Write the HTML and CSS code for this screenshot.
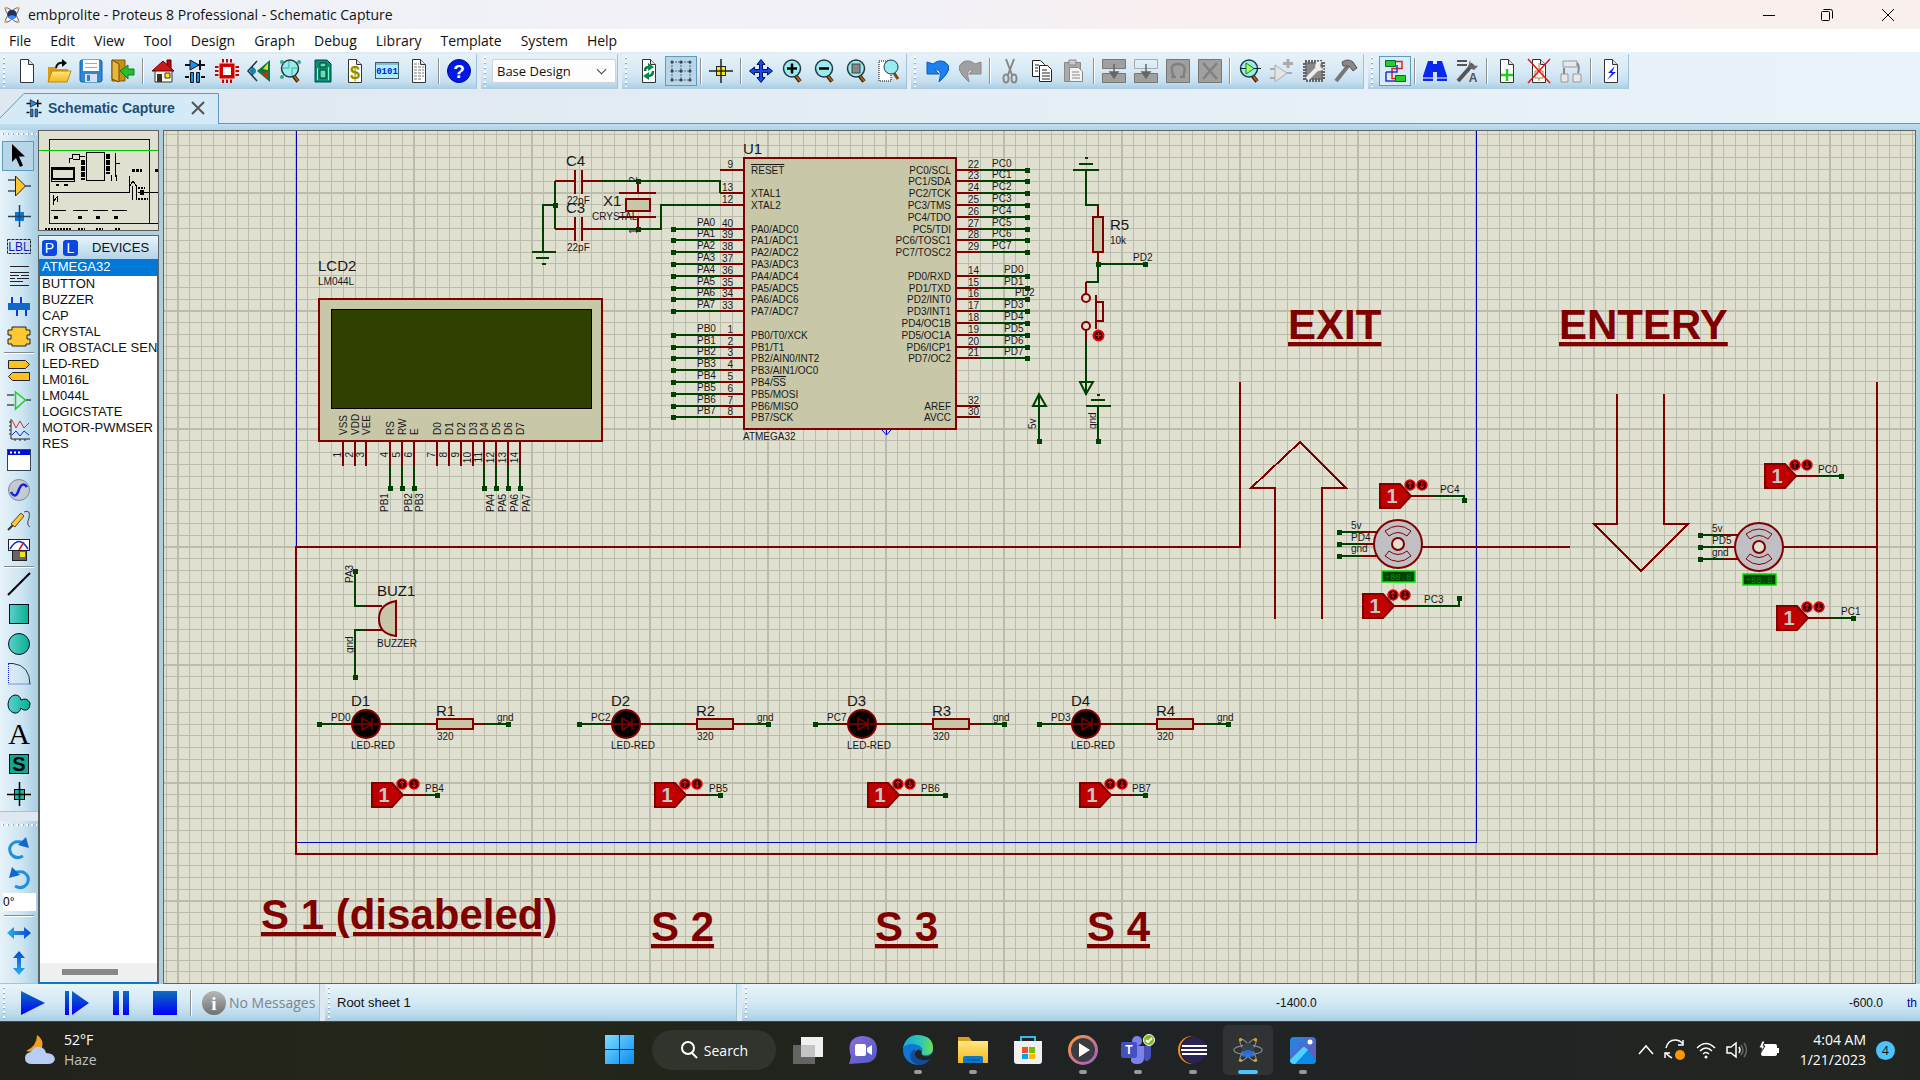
FILE: index.html
```html
<!DOCTYPE html>
<html lang="en">
<head>
<meta charset="utf-8">
<title>embprolite - Proteus 8 Professional - Schematic Capture</title>
<link rel="stylesheet" href="styles.css">
</head>
<body>
<svg class="defs" width="0" height="0" aria-hidden="true">
  <defs>
    <linearGradient id="gBlueV" x1="0" y1="0" x2="0" y2="1"><stop offset="0" stop-color="#0c6fb8"/><stop offset="1" stop-color="#0000ff"/></linearGradient>
    <linearGradient id="gFolder" x1="0" y1="0" x2="0" y2="1"><stop offset="0" stop-color="#ffe680"/><stop offset="1" stop-color="#f5b81c"/></linearGradient>
    <linearGradient id="gTeal" x1="0" y1="0" x2="1" y2="0"><stop offset="0" stop-color="#5cd0cc"/><stop offset="1" stop-color="#08b090"/></linearGradient>
    <linearGradient id="gArrow" x1="0" y1="0" x2="1" y2="0"><stop offset="0" stop-color="#30b0e8"/><stop offset="1" stop-color="#0048d8"/></linearGradient>
    <linearGradient id="gArrowV" x1="0" y1="0" x2="0" y2="1"><stop offset="0" stop-color="#0048d8"/><stop offset="1" stop-color="#30b0e8"/></linearGradient>
    <linearGradient id="gGrey" x1="0" y1="0" x2="0" y2="1"><stop offset="0" stop-color="#b8b8b8"/><stop offset="1" stop-color="#707070"/></linearGradient>
    <linearGradient id="gWin" x1="0" y1="0" x2="1" y2="1"><stop offset="0" stop-color="#7fdcff"/><stop offset="1" stop-color="#0a8cf0"/></linearGradient>
    <linearGradient id="gEdge" x1="0" y1="0" x2="1" y2="0"><stop offset="0" stop-color="#1fa5d8"/><stop offset=".6" stop-color="#2cc8b4"/><stop offset="1" stop-color="#6fe04c"/></linearGradient>
    <linearGradient id="gRing" x1="0" y1="0" x2="1" y2="1"><stop offset="0" stop-color="#ff9838"/><stop offset="1" stop-color="#a05cd0"/></linearGradient>
    <linearGradient id="gPhoto" x1="0" y1="0" x2="1" y2="1"><stop offset="0" stop-color="#1f8be8"/><stop offset="1" stop-color="#7a4cb0"/></linearGradient>
    <linearGradient id="gChat" x1="0" y1="0" x2="1" y2="1"><stop offset="0" stop-color="#8a70d8"/><stop offset="1" stop-color="#5058c8"/></linearGradient>
    <symbol id="page" viewBox="0 0 24 24"><path d="M5.500.5h8l5 5v18h-13z" fill="#fff" stroke="#333"/><path d="M13.500.5v5h5" fill="#ddd" stroke="#333"/></symbol>
    <symbol id="lens" viewBox="0 0 24 24"><path d="M14 16l5 6.500" stroke="#402000" stroke-width="4"/><path d="M15 17l4 5" stroke="#b06818" stroke-width="2"/><circle cx="11" cy="9.500" r="8.500" fill="#98ecf0" stroke="#26383c" stroke-width="1.500"/></symbol>
    <symbol id="schem" viewBox="0 0 24 24"><path d="M2 6h20M6 18H2M18 18h4" stroke="#111" stroke-width="2"/><path d="M7 1v10l9-5z" fill="#1c90f0" stroke="#111"/><path d="M17 1v10" stroke="#111" stroke-width="2"/><path d="M7.500 13.500h3v10h-3zM13.500 13.500h3v10h-3z" fill="#1c90f0" stroke="#111"/></symbol>
    <symbol id="atom" viewBox="0 0 32 32"><g fill="none" stroke="#8c9096" stroke-width="1.200"><ellipse cx="16" cy="16" rx="15" ry="5"/><ellipse cx="16" cy="16" rx="14" ry="4" transform="rotate(55 16 16)"/><ellipse cx="16" cy="16" rx="14" ry="4" transform="rotate(-55 16 16)"/></g><circle cx="16" cy="15" r="6.500" fill="#34404e"/><path d="M10 18q6-4 12 0l2 4q-8 3-16 0z" fill="#2c78e8" opacity=".8"/><g fill="#e0a030"><circle cx="8" cy="5" r="1.800"/><circle cx="24" cy="5" r="1.800"/><circle cx="8" cy="27" r="1.800"/><circle cx="24" cy="27" r="1.800"/></g></symbol>
  </defs>
</svg>

<header class="titlebar">
  <svg class="appicon" viewBox="0 0 32 32" aria-hidden="true"><g fill="none" stroke="#556" stroke-width="1.500"><ellipse cx="16" cy="16" rx="17" ry="5" transform="rotate(48 16 16)"/><ellipse cx="16" cy="16" rx="17" ry="5" transform="rotate(-48 16 16)"/></g><circle cx="16" cy="15" r="8.500" fill="#203458"/><path d="M9 19q7-5 14 0-7 9-14 0" fill="#3b8bff"/><g fill="#e0a860"><circle cx="5" cy="4" r="2.500"/><circle cx="27" cy="4" r="2.500"/><circle cx="5" cy="28" r="2.500"/><circle cx="27" cy="28" r="2.500"/></g></svg>
  <h1 class="title">embprolite - Proteus 8 Professional - Schematic Capture</h1>
  <div class="wincontrols">
    <button aria-label="Minimize"><svg width="14" height="14"><path d="M1 7.500h12" stroke="#000"/></svg></button>
    <button aria-label="Restore"><svg width="14" height="14" fill="none" stroke="#000"><rect x="1.500" y="3.500" width="8" height="9" rx="1"/><path d="M3.500 1.500h7q2 0 2 2v7"/></svg></button>
    <button aria-label="Close"><svg width="14" height="14"><path d="M1 1l12 12M13 1L1 13" stroke="#000"/></svg></button>
  </div>
</header>

<nav class="menubar">
  <button>File</button><button>Edit</button><button>View</button><button>Tool</button><button>Design</button><button>Graph</button><button>Debug</button><button>Library</button><button>Template</button><button>System</button><button>Help</button>
</nav>

<div class="toolbars">
  <div class="toolbar">
    <button aria-label="New"><svg><use href="#page"/></svg></button>
    <button aria-label="Open"><svg viewBox="0 0 24 24"><path d="M1 8h7l2 2h11v13H1z" fill="#d89c10"/><path d="M1 23l4-11h19l-4 11z" fill="url(#gFolder)" stroke="#c08808"/><path d="M9 9q1-6 8-5" fill="none" stroke="#111" stroke-width="2"/><path d="M15 0l5 4-5 4z"/></svg></button>
    <button aria-label="Save"><svg viewBox="0 0 24 24"><rect x="1" y="1" width="22" height="22" rx="2" fill="#2c88d8" stroke="#1060a8"/><path d="M4 1h16v11H4z" fill="#fff"/><path d="M6 4.500h12M6 8.500h12" stroke="#9ab"/><path d="M6 15h12v8H6z" fill="#dde"/><path d="M8 16h3v6H8z" fill="#28c"/></svg></button>
    <button aria-label="Close project"><svg viewBox="0 0 24 24"><path d="M1 1h13v21H1z" fill="#c89018" stroke="#805808"/><path d="M1 1l7 4v18l-7-3z" fill="#e8b838" stroke="#704c08"/><path d="M9 12l8-6v4h6v6h-6v4z" fill="#20c030" stroke="#108018"/></svg></button>
    <i class="sep"></i>
    <button aria-label="Home"><svg viewBox="0 0 24 24"><path d="M16 1h4v9h-4z" fill="#c00" stroke="#500"/><path d="M4 11h17v12H4z" fill="#fffbe0" stroke="#333"/><path d="M1 12L12 2l11 10z" fill="#d01818" stroke="#600"/><path d="M6 15h5v8H6z" fill="#333"/><path d="M14 14h5v5h-5z" fill="#ffe820" stroke="#333"/></svg></button>
    <button aria-label="Schematic capture"><svg><use href="#schem"/></svg></button>
    <button aria-label="PCB layout"><svg viewBox="0 0 24 24"><path d="M8 0v24M12 0v24M16 0v24M0 8h24M0 12h24M0 16h24" stroke="#c80000" stroke-width="2"/><rect x="4" y="4" width="16" height="16" fill="#d00000" stroke="#f8dcdc"/><rect x="8" y="8" width="8" height="8" fill="#fff"/></svg></button>
    <button aria-label="3D visualizer"><svg viewBox="0 0 24 24"><path d="M10 2L1 12l9 10M5 8q5 4 0 8" fill="none" stroke="#234" stroke-width="1.500"/><circle cx="6" cy="12" r="3" fill="#18a"/><path d="M23 1v22L10 12z" fill="#0a7a38"/><path d="M21 4v7l-5-1z" fill="#e8e020"/><path d="M21 13v7l-7-6z" fill="#e02020"/></svg></button>
    <button aria-label="Gerber viewer"><svg viewBox="0 0 24 24"><use href="#lens"/><path d="M3 9h7V2M19 9h-6v8" fill="none" stroke="#40b088"/><circle cx="3" cy="3" r="2" fill="#3a8"/><circle cx="20" cy="3" r="2" fill="#3a8"/><circle cx="3" cy="18" r="2" fill="#3a8"/></svg></button>
    <button aria-label="Design explorer"><svg viewBox="0 0 24 24"><path d="M4 1h12l4 4v18H4z" fill="#0c9070" stroke="#045"/><path d="M9 4h6v4H9zM9 11h6v8H9z" fill="#60e0b0" stroke="#033"/><path d="M6.500 9v12M17.500 8v13" stroke="#70ffc0"/></svg></button>
    <button aria-label="Bill of materials"><svg viewBox="0 0 24 24"><use href="#page"/><text x="12" y="20" class="ic-dollar">$</text></svg></button>
    <button aria-label="Source code"><svg viewBox="0 0 24 24"><rect x=".5" y="3.500" width="23" height="16" fill="#a8f0ff" stroke="#456"/><path d="M1 5h22" stroke="#68a"/><text x="12" y="15" class="ic-bits">0101</text></svg></button>
    <button aria-label="Project notes"><svg viewBox="0 0 24 24"><use href="#page"/><path d="M7 5h5M7 8h10M7 11h10M7 14h10M7 17h10M7 20h7" stroke="#777" stroke-dasharray="3 1"/></svg></button>
    <i class="sep"></i>
    <button aria-label="Help"><svg viewBox="0 0 24 24"><circle cx="12" cy="12" r="11.500" fill="#0018e8" stroke="#000890"/><text x="12" y="19" class="ic-help">?</text></svg></button>
  </div>
  <div class="toolbar">
    <label class="hidden" for="variant">Design variant</label>
    <select id="variant" class="variant"><option>Base Design</option></select>
  </div>
  <div class="toolbar">
    <button aria-label="Redraw"><svg viewBox="0 0 24 24"><use href="#page"/><path d="M8 12q0-4 4-4M16 12q0 5-5 5" fill="none" stroke="#0a7a40" stroke-width="2.500"/><path d="M11 4l6 4-6 4zM12 13v8l-6-4z" fill="#0a8a48"/></svg></button>
    <button class="pressed" aria-label="Toggle grid"><svg viewBox="0 0 24 24"><path d="M3 3h18M3 12h18M3 21h18M3 3v18M12 3v18M21 3v18" stroke="#567" stroke-dasharray="2 1"/><g fill="#345"><circle cx="3" cy="3" r="1.500"/><circle cx="12" cy="3" r="1.500"/><circle cx="21" cy="3" r="1.500"/><circle cx="3" cy="12" r="1.500"/><circle cx="12" cy="12" r="1.500"/><circle cx="21" cy="12" r="1.500"/><circle cx="3" cy="21" r="1.500"/><circle cx="12" cy="21" r="1.500"/><circle cx="21" cy="21" r="1.500"/></g></svg></button>
    <i class="sep"></i>
    <button aria-label="Origin"><svg viewBox="0 0 24 24"><rect x="7.500" y="7.500" width="9" height="9" fill="#ffe800" stroke="#222"/><path d="M12 0v24M0 12h24" stroke="#222" stroke-width="1.500"/></svg></button>
    <i class="sep"></i>
    <button aria-label="Centre at cursor"><svg viewBox="0 0 24 24"><path d="M12 .5l4 5h-2.500v5h5V8l5 4-5 4v-2.500h-5v5H16l-4 5-4-5h2.500v-5h-5V16l-5-4 5-4v2.500h5v-5H8z" fill="#1848f0" stroke="#001050"/></svg></button>
    <button aria-label="Zoom in"><svg viewBox="0 0 24 24"><use href="#lens"/><path d="M6 9.500h10M11 4.500v10" stroke="#000" stroke-width="2.500"/></svg></button>
    <button aria-label="Zoom out"><svg viewBox="0 0 24 24"><use href="#lens"/><path d="M6 9.500h10" stroke="#000" stroke-width="2.500"/></svg></button>
    <button aria-label="Zoom to sheet"><svg viewBox="0 0 24 24"><use href="#lens"/><rect x="7" y="5" width="8" height="9" fill="#888" stroke="#444"/></svg></button>
    <button aria-label="Zoom to area"><svg viewBox="0 0 24 24"><rect x="2" y="2" width="12" height="20" fill="#fff" stroke="#000" stroke-dasharray="1 1"/><path d="M17 14l4 6" stroke="#804810" stroke-width="3"/><circle cx="14" cy="8" r="7" fill="#98ecf0" stroke="#26383c"/></svg></button>
  </div>
  <div class="toolbar">
    <button aria-label="Undo"><svg viewBox="0 0 24 24"><path d="M1 3v12h12l-4-4q8-2 4 12 16-14 6-20-6-3-12 2z" fill="#1c80f0" stroke="#0c58c0"/></svg></button>
    <button aria-label="Redo"><svg viewBox="0 0 24 24"><path d="M23 3v12H11l4-4q-8-2-4 12Q-5 9 5 3q6-3 12 2z" fill="#a0a0a0" stroke="#888"/></svg></button>
    <i class="sep"></i>
    <button aria-label="Cut"><svg viewBox="0 0 24 24" fill="none" stroke="#888" stroke-width="2"><path d="M8 0l6 16M16 0l-6 16"/><ellipse cx="8" cy="19.500" rx="2.500" ry="4"/><ellipse cx="16" cy="19.500" rx="2.500" ry="4"/></svg></button>
    <button aria-label="Copy"><svg viewBox="0 0 24 24" fill="#fff" stroke="#222"><path d="M2.500 1.500h8l4 4v12h-12z"/><path d="M9.500 6.500h8l4 4v12h-12z"/><path d="M5 6h4M5 9h3M5 12h3M12 11h5M12 14h8M12 17h8M12 20h8"/></svg></button>
    <button aria-label="Paste"><svg viewBox="0 0 24 24"><path d="M2.500 3.500h16v19h-16z" fill="#aaa" stroke="#888"/><path d="M7 1h7v5H7z" fill="#ccc" stroke="#888"/><path d="M7.500 8.500h9l4 4v10h-13z" fill="#f4f4f4" stroke="#888"/><path d="M10 13h7M10 16h8M10 19h8" stroke="#888"/></svg></button>
    <i class="sep"></i>
    <button aria-label="Block copy"><svg viewBox="0 0 24 24"><path d="M.5.5h23v9H.5zM.5 14.500h23v9H.5z" fill="#a0a0a0" stroke="#777"/><path d="M12 5v8M8 13h8l-4 6z" stroke="#666" stroke-width="1.500" fill="#666"/></svg></button>
    <button aria-label="Block move"><svg viewBox="0 0 24 24"><path d="M.5.5h23v9H.5z" fill="none" stroke="#aaa"/><path d="M.5 14.500h23v9H.5z" fill="#a0a0a0" stroke="#777"/><path d="M12 5v8M8 13h8l-4 6z" stroke="#666" stroke-width="1.500" fill="#666"/></svg></button>
    <button aria-label="Block rotate"><svg viewBox="0 0 24 24"><path d="M.5.5h23v23H.5z" fill="#a0a0a0" stroke="#777"/><path d="M8 18q-6-13 4-13t5 13M5 18h5M14 18h5" fill="none" stroke="#808080" stroke-width="2.500"/></svg></button>
    <button aria-label="Block delete"><svg viewBox="0 0 24 24"><path d="M.5.5h23v23H.5z" fill="#a0a0a0" stroke="#777"/><path d="M5 4l14 16M19 4L5 20" stroke="#808080" stroke-width="2.500"/></svg></button>
    <i class="sep"></i>
    <button aria-label="Pick parts"><svg viewBox="0 0 24 24"><use href="#lens"/><path d="M8 4v11l8-5.500z" fill="#b0ff60" stroke="#083"/><path d="M2 9.500h6M16 9.500h7" stroke="#123"/></svg></button>
    <button aria-label="Make device"><svg viewBox="0 0 24 24"><path d="M0 10h6M0 19h6M16 14h6" stroke="#aaa" stroke-width="2"/><path d="M5 6v17l12-9z" fill="#e4e4e4" stroke="#aaa"/><path d="M18 0v9M13 4.500h10" stroke="#aaa" stroke-width="3"/></svg></button>
    <button aria-label="Packaging tool"><svg viewBox="0 0 24 24"><rect x="3" y="3" width="18" height="18" fill="#888" stroke="#666" stroke-width="4" stroke-dasharray="2 1"/><path d="M5 20L17 8" stroke="#eee" stroke-width="4"/><path d="M14 3l-1 5 4 4 6-2-4-1-1-3 2-4z" fill="#eee"/></svg></button>
    <button aria-label="Decompose"><svg viewBox="0 0 24 24"><path d="M2 22L14 7" stroke="#777" stroke-width="4"/><path d="M8 3q6-4 11 0l4 6-4 3-4-5-6 0z" fill="#888" stroke="#555"/></svg></button>
  </div>
  <div class="toolbar">
    <button class="pressed" aria-label="Wire autorouter"><svg viewBox="0 0 24 24" fill="none"><path d="M12 2.500h7v7H9v10h4" stroke="#e02020" stroke-width="1.500"/><path d="M14 6v7h-3M3 13v9h10M3 13h9" stroke="#2030e0" stroke-width="1.500"/><path d="M2.500 1.500h10v6h-10zM12.500 16.500h10v6h-10z" fill="#20d020" stroke="#064"/></svg></button>
    <i class="sep"></i>
    <button aria-label="Search and tag"><svg viewBox="0 0 24 24"><path d="M5 2h5v3h4V2h5l5 15v5H14v-9h-4v9H0v-5z" fill="#0828f0"/><path d="M0 19h10M14 19h10" stroke="#fff"/></svg></button>
    <button aria-label="Property assignment"><svg viewBox="0 0 24 24"><path d="M2 2h10M2 6h10" stroke="#555" stroke-width="2"/><path d="M3 22L18 5" stroke="#555" stroke-width="4"/><path d="M15 1l1 5 7 1-4 4-6-3z" fill="#666"/><text x="18" y="23" class="ic-a">A</text></svg></button>
    <i class="sep"></i>
    <button aria-label="New sheet"><svg viewBox="0 0 24 24"><use href="#page"/><path d="M12 10v12M6 16h12" stroke="#20d020" stroke-width="2.500"/></svg></button>
    <button aria-label="Remove sheet"><svg viewBox="0 0 24 24"><use href="#page"/><path d="M8 12h8v7H8zM12 4v8M12 19v3" fill="none" stroke="#b87840"/><path d="M1 0l22 24M23 0L1 24" stroke="#e81010" stroke-width="1.500"/></svg></button>
    <button aria-label="Exit to parent"><svg viewBox="0 0 24 24"><path d="M4 2h14v6H4zM2 15h7v8H2zM14 15h8v8h-8z" fill="#e8e8e8" stroke="#999"/><path d="M5 15V9M18 4q3 3 1 10" fill="none" stroke="#888" stroke-width="2"/></svg></button>
    <i class="sep"></i>
    <button aria-label="Electrical rules check"><svg viewBox="0 0 24 24"><use href="#page"/><path d="M16 7l-7 7h4l-5 7 9-8h-4z" fill="#1020f0"/></svg></button>
  </div>
</div>

<div class="tabs">
  <div class="tab">
    <svg class="tabshape" preserveAspectRatio="none" viewBox="0 0 219 31" aria-hidden="true"><path d="M0 31V25L24 .5H218.500V31z" fill="#d4eaf6"/><path d="M0 25L24 .5H218.500V31" fill="none" stroke="#5f9cb8"/></svg>
    <svg class="tabicon"><use href="#schem"/></svg>
    <span>Schematic Capture</span>
    <button aria-label="Close tab"><svg width="14" height="14"><path d="M1 1l12 12M13 1L1 13" stroke="#555" stroke-width="2"/></svg></button>
  </div>
</div>

<main class="workspace">
  <aside class="tools">
    <div class="toolcol">
      <button class="pressed" aria-label="Selection"><svg viewBox="0 0 24 24"><path d="M5 0v18l4-4 4 9 3-1.500-4-9h6z"/></svg></button>
      <button aria-label="Component"><svg viewBox="0 0 24 24"><path d="M1 6h8M1 17h8M18 12h6" stroke="#000"/><path d="M8.500 2v20l10-10z" fill="#ffc830" stroke="#222"/></svg></button>
      <button aria-label="Junction dot"><svg viewBox="0 0 24 24"><rect x="8" y="8" width="9" height="9" fill="#0878e0"/><path d="M12.500 1v22M1 12.500h23" stroke="#244458" stroke-width="1.500"/></svg></button>
      <button aria-label="Wire label"><svg viewBox="0 0 24 24"><rect x=".5" y="5.500" width="23" height="14" fill="none" stroke="#222" stroke-dasharray="3 1"/><text x="12" y="17" class="ic-lbl">LBL</text></svg></button>
      <button aria-label="Text script"><svg viewBox="0 0 24 24"><path d="M3 2.500h19M3 8.500h19M3 11.500h9M14 11.500h8M3 14.500h5M10 14.500h12M3 17.500h13M3 21.500h19" stroke="#222"/></svg></button>
      <button aria-label="Bus"><svg viewBox="0 0 24 24"><path d="M5 3v8M14 3v8M10 13v9M19 13v9" stroke="#1038e0" stroke-width="2"/><rect x="1" y="9" width="22" height="7" fill="#1068c8"/></svg></button>
      <button aria-label="Subcircuit"><svg viewBox="0 0 24 24"><path d="M5 3h14v3h4v5h-3v4h3v5h-4v2H5v-2H1v-5h3v-4H1V6h4z" fill="#ffc830" stroke="#222"/></svg></button>
      <i class="hsep"></i>
      <button aria-label="Terminals"><svg viewBox="0 0 24 24" fill="#ffc020" stroke="#222"><path d="M1.500 2.500h17l4 4-4 4h-17zM22.500 14.500h-17l-4 4 4 4h17z"/></svg></button>
      <button aria-label="Device pins"><svg viewBox="0 0 24 24"><path d="M0 7h7M0 17h7M19 12h5" stroke="#000"/><path d="M8.500 4v17l10-9z" fill="none" stroke="#20d020" stroke-width="1.500"/></svg></button>
      <button aria-label="Graph"><svg viewBox="0 0 24 24" fill="none"><path d="M4 1v20h19M2 4h2M2 8h2M2 12h2M2 16h2M8 21v2M13 21v2M18 21v2" stroke="#222"/><path d="M5 2l4 8 4-7 4 7 5-5" stroke="#e02828"/><path d="M5 17l4-4 4 5 4-5 5 4" stroke="#1028e0"/></svg></button>
      <button aria-label="Active popup"><svg viewBox="0 0 24 24"><rect x=".5" y="1.500" width="23" height="21" fill="#fff" stroke="#345"/><path d="M1 2h22v5H1z" fill="#0010d0"/><path d="M3 4.500h2M7 4.500h2M11 4.500h2" stroke="#fff" stroke-width="2"/></svg></button>
      <button aria-label="Generator"><svg viewBox="0 0 24 24"><circle cx="12" cy="12" r="10.500" fill="#c4cad0" stroke="#808890"/><path d="M4 14q4 7 7 0 4-12 9-5" fill="none" stroke="#1020e8" stroke-width="2.500"/></svg></button>
      <button aria-label="Probe"><svg viewBox="0 0 24 24"><path d="M1 22l6-6" stroke="#333" stroke-width="2"/><path d="M4 16L14 5l3 3L8 19z" fill="#ffc830" stroke="#543"/><path d="M17 4q7-3 5 6-3 7 1 9" fill="none" stroke="#444"/></svg></button>
      <button aria-label="Instruments"><svg viewBox="0 0 24 24"><rect x="1.500" y="1.500" width="21" height="11" fill="#fff" stroke="#222"/><path d="M3 11q9-15 18 0" fill="none" stroke="#1028e0" stroke-width="1.500"/><path d="M12 12l5-8" stroke="#e01010" stroke-width="1.500"/><rect x="5.500" y="12.500" width="14" height="10" fill="#666" stroke="#222"/><rect x="13" y="14" width="5" height="5" fill="#f0e020"/></svg></button>
      <i class="hsep"></i>
      <button aria-label="2D line"><svg viewBox="0 0 24 24"><path d="M1 23L23 1" stroke="#000" stroke-width="2"/></svg></button>
      <button aria-label="2D box"><svg viewBox="0 0 24 24"><rect x="2.500" y="2.500" width="19" height="19" fill="url(#gTeal)" stroke="#012"/></svg></button>
      <button aria-label="2D circle"><svg viewBox="0 0 24 24"><circle cx="12" cy="12" r="10.500" fill="url(#gTeal)" stroke="#012"/></svg></button>
      <button aria-label="2D arc"><svg viewBox="0 0 24 24" fill="none"><path d="M1.500 2v20h21" stroke="#2030e0" stroke-dasharray="1 1"/><path d="M1 1.500h5q17 2 17 21" stroke="#333"/></svg></button>
      <button aria-label="2D path"><svg viewBox="0 0 24 24"><path d="M8 3q5 0 6 5 6-3 9 3 0 8-6 7-3-1-3-2-2 6-7 5-6-2-6-9 1-8 7-9z" fill="url(#gTeal)" stroke="#012"/></svg></button>
      <button aria-label="2D text"><svg viewBox="0 0 24 24"><text x="12" y="22" class="ic-serif">A</text></svg></button>
      <button aria-label="2D symbol"><svg viewBox="0 0 24 24"><rect x="2.500" y="2.500" width="19" height="19" fill="#10a890" stroke="#012"/><text x="12" y="19" class="ic-s">S</text></svg></button>
      <button aria-label="2D marker"><svg viewBox="0 0 24 24"><rect x="7.500" y="7.500" width="10" height="10" fill="#18b8a0" stroke="#000"/><path d="M12.500 0v24M0 12.500h24" stroke="#000" stroke-width="1.500"/></svg></button>
    </div>
    <div class="toolcol">
      <button aria-label="Rotate clockwise"><svg viewBox="0 0 24 24"><path d="M16 20q-7 4-12-2-4-8 4-12 5-1 9 1" fill="none" stroke="#2090e0" stroke-width="3"/><path d="M19 1l3 11-11-3z" fill="#1468c8"/></svg></button>
      <button aria-label="Rotate anticlockwise"><svg viewBox="0 0 24 24"><path d="M8 20q7 4 12-2 4-8-4-12-5-1-9 1" fill="none" stroke="#2090e0" stroke-width="3"/><path d="M5 1L2 12l11-3z" fill="#1468c8"/></svg></button>
      <label class="hidden" for="angle">Angle</label>
      <input id="angle" class="angle" value="0°">
      <i class="hsep"></i>
      <button aria-label="Mirror horizontally"><svg viewBox="0 0 24 24"><path d="M0 12l7-6v4h10V6l7 6-7 6v-4H7v4z" fill="url(#gArrow)"/></svg></button>
      <button aria-label="Mirror vertically"><svg viewBox="0 0 24 24"><path d="M12 0l6 7h-4v10h4l-6 7-6-7h4V7H6z" fill="url(#gArrowV)"/></svg></button>
    </div>
  </aside>

  <section class="side">
    <div class="overview">
      <svg class="crisp" aria-hidden="true">
        <g fill="none" stroke="#000" stroke-width="1">
          <path d="M10.500 61.500h80V44.500M10.500 61.500V92.500H120"/>
          <path d="M90 56l4-6 4 6M93.500 55v14M97.500 55v14"/>
          <path d="M12.500 36.500h23v14h-23z"/><path d="M13 37.500h22v10H13z" stroke-width="2"/>
          <path d="M47.500 21.500h18v28h-18z"/>
          <path d="M30.500 32v-5h3v-4h7v5h-7M41 25.500h5"/>
          <path d="M44 29v20M69 23v20" stroke-width="4" stroke-dasharray="5 1"/>
          <path d="M76.500 22v24M77 32.500h4M72.500 44v6M77.500 44v6"/>
          <path d="M17 54h3M25 54h4" stroke-width="2"/><path d="M14.500 64v10M15 70l3-4v5M12 79.500h15M34 79.500h15M54 79.500h15M73 79.500h15"/>
          <path d="M15 86h4M39 86h4M57 86h4M75 86h4" stroke-width="3"/>
          <path d="M93 39h10M116 39h4" stroke-width="3" stroke-dasharray="3 1"/>
          <path d="M99 56.500h7M99 67.500h10M6 97.500h26M39 97.500h7M57 97.500h7M76 97.500h6" stroke-dasharray="2 1" stroke-width="2"/>
          <path d="M99 61.500h20"/><circle cx="103" cy="61.500" r="2" fill="#000"/>
        </g>
        <rect x="10" y="8" width="100" height="84" fill="none" stroke="#0000b8"/>
        <path d="M0 19.500h120" stroke="#00c000"/>
      </svg>
    </div>
    <div class="devices">
      <div class="devhead"><button>P</button><button>L</button><h2>DEVICES</h2></div>
      <ul class="devlist">
        <li class="selected">ATMEGA32</li><li>BUTTON</li><li>BUZZER</li><li>CAP</li><li>CRYSTAL</li><li>IR OBSTACLE SEN</li><li>LED-RED</li><li>LM016L</li><li>LM044L</li><li>LOGICSTATE</li><li>MOTOR-PWMSER</li><li>RES</li>
      </ul>
      <div class="hscroll"><i></i></div>
    </div>
  </section>

  <section class="canvas">
    <svg class="sheet">
      <defs>
        <pattern id="grid" width="118" height="118" x="178" y="193" patternUnits="userSpaceOnUse">
          <path d="M11.500 0v118M23.500 0v118M35.500 0v118M47.500 0v118M59.500 0v118M70.500 0v118M82.500 0v118M94.500 0v118M106.500 0v118M0 11.500h118M0 23.500h118M0 35.500h118M0 47.500h118M0 59.500h118M0 70.500h118M0 82.500h118M0 94.500h118M0 106.500h118" stroke="#bcbcac"/>
          <path d="M0 0v118M118 0v118M0 0h118M0 118h118" stroke="#bcbcac" stroke-width="2"/>
        </pattern>
        <g id="logic">
          <path d="M1-12h20L32 0 21 12H1z" class="body"/>
          <text x="13" y="7" class="one">1</text>
          <g stroke="#f00000" stroke-width="1.500" fill="#400000"><circle cx="31" cy="-11" r="5"/><circle cx="43" cy="-11" r="5"/></g>
          <path d="M31-14v6M29-12l2-2 2 2M43-14v6M41-10l2 2 2-2" stroke="#ff2020" fill="none"/>
          <path d="M32 0h22" class="pin"/>
        </g>
        <g id="motor">
          <path d="M-36-12h20M-36 0h14M-36 12h20" class="pin"/>
          <path d="M-59-12h23M-59 0h23M-59 12h23" class="wire"/>
          <path d="M-61-12h5M-61 0h5M-61 12h5" class="dot"/>
          <circle r="24" fill="#c0c0c4" stroke="#800000" stroke-width="2"/>
          <circle r="6" fill="#e0e0d0" stroke="#800000" stroke-width="2"/>
          <path d="M-13-13q13-10 26 0l-4 5q-9-7-18 0zM-13 12q13 11 26 0l-4-5q-9 7-18 0z" fill="none" stroke="#800000"/>
          <rect x="-16" y="27" width="33" height="11" fill="#004000" stroke="#00e800" stroke-width="1.500"/>
          <text x="0" y="36" class="disp">+88.8</text>
        </g>
        <g id="ledres">
          <path d="M319 724h24M391 724h34M485 724h23" class="wire"/>
          <path d="M343 724h48M425 724h60" class="pin"/>
          <path d="M317 724h5M506 724h5" class="dot"/>
          <circle cx="366" cy="724" r="14" fill="#000" stroke="#800000" stroke-width="2"/>
          <path d="M352 724h28M362 718v12l10-6zM372 718v12" fill="none" stroke="#800000" stroke-width="1.500"/>
          <rect x="437" y="719" width="36" height="10" class="body"/>
          <text x="351" y="749">LED-RED</text><text x="437" y="740">320</text><text x="497" y="721">gnd</text>
        </g>
      </defs>
      <g transform="translate(-164 -131)">
        <rect x="164" y="131" width="4000" height="3000" fill="url(#grid)" class="crisp"/>
        <path d="M296.500 131V842.500H1476.500V131" fill="none" stroke="#0000b8" class="crisp"/>
        <path d="M1240 382V547H296V854H1877V382M1783 547h94M1417 547h153" class="pin"/>
        <path d="M1275 619V488h-24l49-46 46 46h-24V619M1617 394V524h-23l47 47 47-47h-24V394" class="art"/>

        <rect x="744" y="158" width="212" height="271" class="body"/>
        <path d="M720 170h24M720 193h24M720 205h24M720 229h24M720 240h24M720 252h24M720 264h24M720 276h24M720 288h24M720 299h24M720 311h24M720 335h24M720 347h24M720 358h24M720 370h24M720 382h24M720 394h24M720 406h24M720 417h24
          M956 170h24M956 181h24M956 193h24M956 205h24M956 217h24M956 229h24M956 240h24M956 252h24M956 276h24M956 288h24M956 299h24M956 311h24M956 323h24M956 335h24M956 347h24M956 358h24M956 406h24M956 417h24" class="pin"/>
        <path d="M673 229h47M673 240h47M673 252h47M673 264h47M673 276h47M673 288h47M673 299h47M673 311h47M673 335h47M673 347h47M673 358h47M673 370h47M673 382h47M673 394h47M673 406h47M673 417h47
          M980 170h47M980 181h47M980 193h47M980 205h47M980 217h47M980 229h47M980 240h47M980 252h47M980 276h47M980 288h47M980 299h47M980 311h47M980 323h47M980 335h47M980 347h47M980 358h47" class="wire"/>
        <path d="M671 229h5M671 240h5M671 252h5M671 264h5M671 276h5M671 288h5M671 299h5M671 311h5M671 335h5M671 347h5M671 358h5M671 370h5M671 382h5M671 394h5M671 406h5M671 417h5
          M1025 170h5M1025 181h5M1025 193h5M1025 205h5M1025 217h5M1025 229h5M1025 240h5M1025 252h5M1025 276h5M1025 288h5M1025 299h5M1025 311h5M1025 323h5M1025 335h5M1025 347h5M1025 358h5" class="dot"/>
        <path d="M886.500 430v5M882 430l4.500 5 4.500-5" fill="none" stroke="#0000d0"/>
        <g class="name"><text x="743" y="154">U1</text><text x="318" y="271">LCD2</text><text x="566" y="166">C4</text><text x="566" y="213">C3</text><text x="603" y="206">X1</text><text x="1110" y="230">R5</text><text x="377" y="596">BUZ1</text></g>
        <g><text x="751" y="174" class="over">RESET</text><text x="751" y="197">XTAL1</text><text x="751" y="209">XTAL2</text>
          <text x="751" y="233">PA0/ADC0</text><text x="751" y="244">PA1/ADC1</text><text x="751" y="256">PA2/ADC2</text><text x="751" y="268">PA3/ADC3</text><text x="751" y="280">PA4/ADC4</text><text x="751" y="292">PA5/ADC5</text><text x="751" y="303">PA6/ADC6</text><text x="751" y="315">PA7/ADC7</text>
          <text x="751" y="339">PB0/T0/XCK</text><text x="751" y="351">PB1/T1</text><text x="751" y="362">PB2/AIN0/INT2</text><text x="751" y="374">PB3/AIN1/OC0</text><text x="751" y="386">PB4/<tspan class="over">SS</tspan></text><text x="751" y="398">PB5/MOSI</text><text x="751" y="410">PB6/MISO</text><text x="751" y="421">PB7/SCK</text></g>
        <g class="end"><text x="951" y="174">PC0/SCL</text><text x="951" y="185">PC1/SDA</text><text x="951" y="197">PC2/TCK</text><text x="951" y="209">PC3/TMS</text><text x="951" y="221">PC4/TDO</text><text x="951" y="233">PC5/TDI</text><text x="951" y="244">PC6/TOSC1</text><text x="951" y="256">PC7/TOSC2</text>
          <text x="951" y="280">PD0/RXD</text><text x="951" y="292">PD1/TXD</text><text x="951" y="303">PD2/INT0</text><text x="951" y="315">PD3/INT1</text><text x="951" y="327">PD4/OC1B</text><text x="951" y="339">PD5/OC1A</text><text x="951" y="351">PD6/ICP1</text><text x="951" y="362">PD7/OC2</text><text x="951" y="410">AREF</text><text x="951" y="421">AVCC</text>
          <text x="733" y="168">9</text><text x="733" y="191">13</text><text x="733" y="203">12</text><text x="733" y="227">40</text><text x="733" y="238">39</text><text x="733" y="250">38</text><text x="733" y="262">37</text><text x="733" y="274">36</text><text x="733" y="286">35</text><text x="733" y="297">34</text><text x="733" y="309">33</text>
          <text x="733" y="333">1</text><text x="733" y="345">2</text><text x="733" y="356">3</text><text x="733" y="368">4</text><text x="733" y="380">5</text><text x="733" y="392">6</text><text x="733" y="404">7</text><text x="733" y="415">8</text></g>
        <g><text x="968" y="168">22</text><text x="968" y="179">23</text><text x="968" y="191">24</text><text x="968" y="203">25</text><text x="968" y="215">26</text><text x="968" y="227">27</text><text x="968" y="238">28</text><text x="968" y="250">29</text><text x="968" y="274">14</text><text x="968" y="286">15</text><text x="968" y="297">16</text><text x="968" y="309">17</text><text x="968" y="321">18</text><text x="968" y="333">19</text><text x="968" y="345">20</text><text x="968" y="356">21</text><text x="968" y="404">32</text><text x="968" y="415">30</text>
          <text x="697" y="226">PA0</text><text x="697" y="237">PA1</text><text x="697" y="249">PA2</text><text x="697" y="261">PA3</text><text x="697" y="273">PA4</text><text x="697" y="285">PA5</text><text x="697" y="296">PA6</text><text x="697" y="308">PA7</text>
          <text x="697" y="332">PB0</text><text x="697" y="344">PB1</text><text x="697" y="355">PB2</text><text x="697" y="367">PB3</text><text x="697" y="379">PB4</text><text x="697" y="391">PB5</text><text x="697" y="403">PB6</text><text x="697" y="414">PB7</text>
          <text x="992" y="167">PC0</text><text x="992" y="178">PC1</text><text x="992" y="190">PC2</text><text x="992" y="202">PC3</text><text x="992" y="214">PC4</text><text x="992" y="226">PC5</text><text x="992" y="237">PC6</text><text x="992" y="249">PC7</text>
          <text x="1004" y="273">PD0</text><text x="1004" y="285">PD1</text><text x="1015" y="296">PD2</text><text x="1004" y="308">PD3</text><text x="1004" y="320">PD4</text><text x="1004" y="332">PD5</text><text x="1004" y="344">PD6</text><text x="1004" y="355">PD7</text>
          <text x="743" y="440">ATMEGA32</text></g>

        <path d="M555 181v48M555 205h-12v47M532 252h24M536 258h13M542 264h4M602 181h118v12M602 229h59v-24h59" class="wire"/>
        <path d="M555 181h20M575 170v24M582 170v24M582 181h20M555 229h20M575 217v24M582 217v24M582 229h20M638 181v12M619 193h37M619 217h37M638 217v12" class="pin"/>
        <rect x="626" y="199" width="24" height="12" class="body"/>
        <path d="M553 205h5M636 181h5M636 229h5" class="dot"/>
        <text x="567" y="204">22pF</text><text x="567" y="251">22pF</text><text x="592" y="220">CRYSTAL</text>
        <text transform="translate(637 182) rotate(-90)">2</text><text transform="translate(637 234) rotate(-90)">1</text>

        <text x="318" y="285">LM044L</text>
        <rect x="319" y="299" width="283" height="142" class="body"/>
        <rect x="331.500" y="309.500" width="260" height="99" fill="#304000" stroke="#000"/>
        <path d="M343 441v25M355 441v25M366 441v25M390 441v25M402 441v25M414 441v25M437 441v25M449 441v25M461 441v25M473 441v25M484 441v25M496 441v25M508 441v25M520 441v25" class="pin"/>
        <path d="M390 466v22M402 466v22M414 466v22M484 466v22M496 466v22M508 466v22M520 466v22" class="wire"/>
        <path d="M388 488h5M400 488h5M412 488h5M482 488h5M494 488h5M506 488h5M518 488h5" class="dot"/>
        <g><text transform="translate(347 435) rotate(-90)">VSS</text><text transform="translate(359 435) rotate(-90)">VDD</text><text transform="translate(370 435) rotate(-90)">VEE</text><text transform="translate(394 435) rotate(-90)">RS</text><text transform="translate(406 435) rotate(-90)">RW</text><text transform="translate(418 435) rotate(-90)">E</text><text transform="translate(441 435) rotate(-90)">D0</text><text transform="translate(453 435) rotate(-90)">D1</text><text transform="translate(465 435) rotate(-90)">D2</text><text transform="translate(477 435) rotate(-90)">D3</text><text transform="translate(488 435) rotate(-90)">D4</text><text transform="translate(500 435) rotate(-90)">D5</text><text transform="translate(512 435) rotate(-90)">D6</text><text transform="translate(524 435) rotate(-90)">D7</text></g>
        <g class="end"><text transform="translate(341 452) rotate(-90)">1</text><text transform="translate(353 452) rotate(-90)">2</text><text transform="translate(364 452) rotate(-90)">3</text><text transform="translate(388 452) rotate(-90)">4</text><text transform="translate(400 452) rotate(-90)">5</text><text transform="translate(412 452) rotate(-90)">6</text><text transform="translate(435 452) rotate(-90)">7</text><text transform="translate(447 452) rotate(-90)">8</text><text transform="translate(459 452) rotate(-90)">9</text><text transform="translate(471 452) rotate(-90)">10</text><text transform="translate(482 452) rotate(-90)">11</text><text transform="translate(494 452) rotate(-90)">12</text><text transform="translate(506 452) rotate(-90)">13</text><text transform="translate(518 452) rotate(-90)">14</text></g>
        <g><text transform="translate(388 512) rotate(-90)">PB1</text><text transform="translate(412 512) rotate(-90)">PB2</text><text transform="translate(423 512) rotate(-90)">PB3</text><text transform="translate(494 512) rotate(-90)">PA4</text><text transform="translate(506 512) rotate(-90)">PA5</text><text transform="translate(518 512) rotate(-90)">PA6</text><text transform="translate(530 512) rotate(-90)">PA7</text></g>

        <path d="M1085 158h3M1079 164h14M1073 170h26M1086 170v35h13M1098 264h47M1098 264v18h-12M1086 341v54M1097 395h3M1091 400h14M1086 406h25M1098 406v35M1039 396v45" class="wire"/>
        <path d="M1080 382h13l-7 12zM1033 406h13l-7-12z" fill="none" stroke="#004000" stroke-width="2"/>
        <path d="M1098 205v12M1098 252v12M1086 282v11M1086 330v11M1096 295v34M1096 302h7v19h-7" class="pin"/>
        <rect x="1093" y="217" width="10" height="35" class="body"/>
        <g fill="#e0e0d0" stroke="#800000" stroke-width="2"><circle cx="1086" cy="298" r="4"/><circle cx="1086" cy="326" r="4"/></g>
        <circle cx="1098.500" cy="335.500" r="5" fill="#400000" stroke="#f00000" stroke-width="2"/><path d="M1096 335.500h5M1098.500 333v5" stroke="#f02020"/>
        <path d="M1096 264h5M1143 264h5M1096 441h5M1037 441h5" class="dot"/>
        <text x="1110" y="244">10k</text><text x="1133" y="261">PD2</text>
        <text transform="translate(1096 429) rotate(-90)">gnd</text><text transform="translate(1036 429) rotate(-90)">5v</text>

        <path d="M355 571v35h11M355 677v-47h11" class="wire"/><path d="M366 606h16M366 630h16" class="pin"/>
        <path d="M353 571h5M353 677h5" class="dot"/>
        <path d="M396 601v35q-17-2-17-17t17-18z" class="body"/>
        <text x="377" y="647">BUZZER</text>
        <text transform="translate(353 583) rotate(-90)">PA3</text><text transform="translate(353 653) rotate(-90)">gnd</text>

        <use href="#ledres"/><use href="#ledres" x="260"/><use href="#ledres" x="496"/><use href="#ledres" x="720"/>
        <g class="name"><text x="351" y="706">D1</text><text x="436" y="716">R1</text><text x="611" y="706">D2</text><text x="696" y="716">R2</text><text x="847" y="706">D3</text><text x="932" y="716">R3</text><text x="1071" y="706">D4</text><text x="1156" y="716">R4</text></g>
        <text x="331" y="721">PD0</text><text x="591" y="721">PC2</text><text x="827" y="721">PC7</text><text x="1051" y="721">PD3</text>

        <use href="#logic" x="371" y="795"/><use href="#logic" x="654" y="795"/><use href="#logic" x="867" y="795"/><use href="#logic" x="1079" y="795"/>
        <use href="#logic" x="1379" y="496"/><use href="#logic" x="1362" y="606"/><use href="#logic" x="1764" y="476"/><use href="#logic" x="1776" y="618"/>
        <use href="#motor" x="1398" y="544"/><use href="#motor" x="1759" y="547"/>
        <path d="M425 795h12M708 795h12M921 795h24M1133 795h13M1433 496h31v4M1416 606h43v-8M1818 476h23M1830 618h23" class="wire"/>
        <path d="M435 795h5M718 795h5M943 795h5M1143 795h5M1462 500h5M1457 598h5M1839 476h5M1851 618h5" class="dot"/>
        <text x="425" y="792">PB4</text><text x="709" y="792">PB5</text><text x="921" y="792">PB6</text><text x="1132" y="792">PB7</text>
        <text x="1440" y="493">PC4</text><text x="1424" y="603">PC3</text><text x="1818" y="473">PC0</text><text x="1841" y="615">PC1</text>
        <text x="1351" y="529">5v</text><text x="1351" y="541">PD4</text><text x="1351" y="552">gnd</text>
        <text x="1712" y="532">5v</text><text x="1712" y="544">PD5</text><text x="1712" y="556">gnd</text>

        <g class="big"><text x="1288" y="339">EXIT</text><text x="1559" y="339">ENTERY</text><text x="261" y="929">S 1 (disabeled)</text><text x="651" y="941">S 2</text><text x="875" y="941">S 3</text><text x="1087" y="941">S 4</text></g>
      </g>
    </svg>
  </section>
</main>

<div class="statusbar">
  <div class="statsec sim">
    <button aria-label="Run"><svg width="24" height="24"><path d="M0 0l24 12L0 24z" fill="url(#gBlueV)"/></svg></button>
    <button aria-label="Step"><svg width="24" height="24"><path d="M0 0h4v24H0zM7 0l17 12L7 24z" fill="url(#gBlueV)"/></svg></button>
    <button aria-label="Pause"><svg width="24" height="24"><path d="M4 0h6v24H4zM14 0h6v24h-6z" fill="url(#gBlueV)"/></svg></button>
    <button aria-label="Stop"><svg width="24" height="24"><path d="M0 0h24v24H0z" fill="url(#gBlueV)"/></svg></button>
    <i class="sep"></i>
    <svg width="24" height="24"><circle cx="12" cy="12" r="12" fill="url(#gGrey)"/><text x="12" y="19" class="ic-info">i</text></svg>
    <span class="msgs">No Messages</span>
  </div>
  <div class="statsec sheetname">Root sheet 1</div>
  <div class="statsec coords"><span class="cx">-1400.0</span><span class="cy">-600.0</span><span class="unit">th</span></div>
</div>

<footer class="taskbar">
  <div class="weather">
    <svg width="32" height="32" viewBox="0 0 32 32"><path d="M13 1q10 7 2 18L2 17Q13 12 13 1z" fill="#f0a020"/><path d="M8 30q-7 0-7-6 0-5 6-6 3-6 9-5 5 1 6 6 8 0 9 6-1 5-7 5z" fill="#b8ccf4"/></svg>
    <div><p>52°F</p><p class="dim">Haze</p></div>
  </div>
  <div class="apps">
    <button aria-label="Start"><svg width="30" height="30"><path d="M0 0h14v14H0zM15 0h14v14H15zM0 15h14v14H0zM15 15h14v14H15z" fill="url(#gWin)"/></svg></button>
    <button class="search"><svg width="18" height="18" fill="none" stroke="#fff" stroke-width="2"><circle cx="8" cy="7" r="6"/><path d="M12 12l5 5"/></svg>Search</button>
    <button aria-label="Task view"><svg width="30" height="30"><path d="M8 2h22v20H8z" fill="#f0f0f0"/><path d="M0 10h22v19H0z" fill="#707070" opacity=".85"/><path d="M8 10h14v12H8z" fill="#c4c4c4"/></svg></button>
    <button aria-label="Chat"><svg width="30" height="30"><path d="M1 29l2-7Q-3 2 15 1q14 1 14 14T15 28z" fill="url(#gChat)"/><rect x="7" y="9" width="11" height="12" rx="2" fill="#fff"/><path d="M19 13l5-3v10l-5-3z" fill="#fff"/></svg></button>
    <button class="run" aria-label="Edge"><svg width="30" height="30"><circle cx="15" cy="15" r="15" fill="#0c78d4"/><path d="M0 13Q3 0 15 0q15 1 15 13 0 8-9 7-3-1-2-3 2-4-4-7-10-3-15 3z" fill="url(#gEdge)"/><path d="M12 14q-3 11 15 10-4 6-12 6-9-3-8-10 1-4 5-6z" fill="#104c9c"/><path d="M30 17q-3 5-9 4-4-1-2-4-3-5-7 0-1 7 7 8 7 1 9-2 3-3 2-6z" fill="#20261f"/></svg></button>
    <button class="run" aria-label="File Explorer"><svg width="30" height="30"><path d="M0 2h11l3 4H0z" fill="#e09c18"/><path d="M0 6h30v22H0z" fill="url(#gFolder)"/><path d="M5 28v-5q0-2 2-2h16q2 0 2 2v5z" fill="#0c78c8"/><path d="M9 25h12" stroke="#064c88"/></svg></button>
    <button aria-label="Store"><svg width="30" height="30"><path d="M8 6V2h14v4" fill="none" stroke="#30b8f0" stroke-width="2"/><path d="M1 6h28v20q0 3-3 3H4q-3 0-3-3z" fill="#f0f0f0"/><path d="M9 12h6v6H9z" fill="#f25022"/><path d="M16 12h6v6h-6z" fill="#7fba00"/><path d="M9 19h6v5H9z" fill="#00a4ef"/><path d="M16 19h6v5h-6z" fill="#ffb900"/></svg></button>
    <button class="run" aria-label="Media Player"><svg width="30" height="30"><circle cx="15" cy="15" r="13.500" fill="#3c3c40" stroke="url(#gRing)" stroke-width="3"/><path d="M11 8l11 7-11 7z" fill="#fff"/></svg></button>
    <button class="run" aria-label="Teams"><svg width="36" height="32"><circle cx="17" cy="7" r="5" fill="#7b83eb"/><path d="M20 12h11v9q0 6-6 6z" fill="#4650b8"/><path d="M11 12h13v12q0 6-7 6t-6-6z" fill="#7b83eb"/><rect x="1" y="8" width="16" height="16" rx="2" fill="#4550c0"/><text x="9" y="20" class="ic-t">T</text><circle cx="29" cy="6" r="5.500" fill="#80b818" stroke="#fff"/><path d="M26 6l2 2 4-4" fill="none" stroke="#fff" stroke-width="2"/></svg></button>
    <button class="run" aria-label="Eclipse"><svg width="30" height="30"><circle cx="14" cy="15" r="14" fill="#f09018"/><circle cx="16" cy="15" r="14" fill="#20201c"/><circle cx="16" cy="15" r="13" fill="#2c2255"/><path d="M4 11h25M3 15h26M4 19h25" stroke="#fff" stroke-width="2"/></svg></button>
    <button class="run active" aria-label="Proteus"><svg width="30" height="30"><use href="#atom"/></svg></button>
    <button class="run" aria-label="Photos"><svg width="30" height="30"><rect x="2" y="2" width="26" height="27" rx="4" fill="url(#gPhoto)"/><path d="M2 25l12-12q2-2 4 0l10 12q0 4-4 4H6q-4 0-4-4z" fill="#0c8ce0"/><path d="M2 25l12-12q2-2 4 0l2 2L7 29q-5 0-5-4z" fill="#50d0ff"/><circle cx="22" cy="7" r="2.500" fill="#fff"/></svg></button>
  </div>
  <div class="tray">
    <svg width="16" height="12"><path d="M1 10l7-8 7 8" fill="none" stroke="#fff" stroke-width="1.500"/></svg>
    <svg width="22" height="22" fill="none" stroke="#fff" stroke-width="1.500"><path d="M2 9q2-8 9-8 5 0 8 4M19 1v5h-5M8 19q-4-2-6-5M1 19v-5h5"/><circle cx="16" cy="16" r="5" fill="#ff9800" stroke="none"/></svg>
    <svg width="20" height="18" fill="none" stroke="#fff" stroke-width="1.500"><path d="M1 7q9-9 18 0M4 10q6-6 12 0M7 13q3-3 6 0"/><circle cx="10" cy="16" r="1.500" fill="#fff" stroke="none"/></svg>
    <svg width="22" height="18" fill="none" stroke="#fff" stroke-width="1.500"><path d="M1 6h4l5-4v14l-5-4H1zM13 6q2 3 0 6"/><path d="M15 4q4 5 0 10M18 2q5 7 0 14" stroke="#666"/></svg>
    <svg width="22" height="18"><rect x="3" y="3" width="16" height="12" rx="2" fill="#fff"/><path d="M20 7v5" stroke="#fff" stroke-width="2"/><path d="M4 0L1 7h3l-2 6 5-8H5l2-5z" fill="#fff" stroke="#22251f"/></svg>
    <div class="clock"><p>4:04 AM</p><p>1/21/2023</p></div>
    <span class="badge">4</span>
  </div>
</footer>
</body>
</html>
```
FILE: styles.css
```css
* { box-sizing: border-box; }
body { margin: 0; height: 100vh; display: flex; flex-direction: column; overflow: hidden; font: 14px "Open Sans", sans-serif; color: #111; background: #dfe8f0; }
button { border: 0; background: none; padding: 0; margin: 0; font: inherit; color: inherit; }
p, h1, h2, ul { margin: 0; padding: 0; }
.defs { position: absolute; }
.hidden { position: absolute; width: 1px; height: 1px; overflow: hidden; clip-path: inset(50%); }
.crisp { shape-rendering: crispEdges; }

.titlebar { flex: none; height: 29px; display: flex; align-items: center; background: linear-gradient(90deg, #eef2f7, #f3f1f7 50%, #faeff0 62%, #f9f0ed); }
.appicon { width: 18px; height: 20px; margin: 0 7px 0 3px; }
.title { flex: 1; font-size: 14px; font-weight: 400; }
.wincontrols { display: flex; }
.wincontrols button { width: 59px; height: 28px; display: flex; align-items: center; justify-content: center; }
.wincontrols button:first-child { width: 57px; }
.wincontrols button:last-child { width: 64px; }

.menubar { flex: none; height: 23px; display: flex; align-items: center; gap: 19px; padding-left: 9px; background: #fff; }

.toolbars { flex: none; height: 37px; display: flex; gap: 4px; padding-top: 2px; background: linear-gradient(90deg, #dfe8f0, #eaf2fa); }
.toolbar { display: flex; align-items: center; padding: 0 1px 1px 11px; position: relative; border-right: 1px solid #9cc4d8; background: linear-gradient(#e6f2f9, #d4e8f4 55%, #c4dff0 80%, #a8cce0); }
.toolbar::before, .statsec::before { content: ""; position: absolute; left: 3px; top: 2px; bottom: 2px; width: 2px; background: repeating-linear-gradient(#fff 0 2px, #9ab 2px 3px, transparent 3px 5px); }
.toolbar button { width: 32px; height: 30px; display: flex; align-items: center; justify-content: center; }
.toolbar svg, .toolcol svg { width: 24px; height: 24px; overflow: visible; }
.toolbar .pressed, .toolcol .pressed { background: #b8d6e8; border: 1px solid #5f9cb8; }
.toolbar:last-child .pressed { background: #d8ecf8; }
.sep { width: 2px; height: 26px; margin: 0 3px; border-left: 1px solid #909090; border-right: 1px solid #fff; }
.variant { width: 124px; height: 24px; padding: 0 8px 0 4px; border: 1px solid #d0d4d8; border-radius: 2px; background: #fdfdfd; font: 13px/22px "Open Sans", sans-serif; color: #111; appearance: none; }
.toolbar:nth-child(2)::after { content: ""; position: absolute; right: 12px; top: 12px; width: 6px; height: 6px; border: solid #444; border-width: 0 1px 1px 0; transform: rotate(45deg); }

.tabs { flex: none; height: 41px; padding-top: 4px; background: linear-gradient(90deg, #dfe8f0, #eaf2fa) 0 0 / 100% 34px no-repeat, linear-gradient(#5f9cb8 1px, #c0dff0 1px, #b0d4e8) 0 34px / 100% 7px no-repeat; }
.tab { position: relative; width: 219px; height: 31px; display: flex; align-items: center; padding: 0 0 2px 25px; font: bold 14px "Liberation Sans", Arial, sans-serif; color: #1c4e78; }
.tabshape { position: absolute; left: 0; top: 0; width: 219px; height: 31px; }
.tabicon { position: relative; width: 18px; height: 20px; margin-right: 5px; }
.tab span { position: relative; flex: 1; }
.tab button { position: relative; width: 42px; height: 14px; display: flex; justify-content: center; }

.workspace { flex: 1; min-height: 0; display: flex; background: #b0cede; padding-right: 4px; }
.tools { flex: none; width: 38px; display: flex; flex-direction: column; gap: 9px; background: #dfe8f0; }
.toolcol { padding: 11px 4px 2px 2px; position: relative; display: flex; flex-direction: column; background: linear-gradient(90deg, #e6f2f9, #cce4f2 60%, #a8cee2); border-bottom: 1px solid #a0c4d8; }
.toolcol::before { content: ""; position: absolute; left: 1px; right: 1px; top: 3px; height: 2px; background: repeating-linear-gradient(90deg, #fff 0 2px, #9ab 2px 3px, transparent 3px 5px); }
.toolcol button { height: 30px; display: flex; align-items: center; justify-content: center; padding-left: 2px; }
.hsep { height: 2px; margin: 1px 0 1px 2px; border-top: 1px solid #888; border-bottom: 1px solid #fff; }
.toolcol + .toolcol { flex: 1; padding-top: 12px; }
.angle { width: 33px; height: 18px; margin: 0 0 3px 1px; border: 0; padding: 0; background: #fff; font: 12px/18px "Liberation Sans", sans-serif; }

.side { flex: none; width: 121px; margin-right: 4px; display: flex; flex-direction: column; gap: 4px; }
.overview { flex: none; height: 101px; background: #e0e0d0; border: 1px solid #606060; overflow: hidden; }
.overview svg { display: block; width: 119px; height: 99px; }
.devices { flex: 1; min-height: 0; display: flex; flex-direction: column; border: 1px solid #5c6468; background: #fff; font: 13px/16px "Liberation Sans", Arial, sans-serif; }
.devhead { height: 23px; display: flex; align-items: center; gap: 6px; padding-left: 3px; background: linear-gradient(#e8f4fb, #b4d4e8); }
.devhead button { width: 15px; height: 16px; border-radius: 3px; background: #0848e0; color: #fff; font: 14px/16px "Liberation Sans", sans-serif; text-align: center; }
.devhead h2 { margin-left: 8px; font-size: 13px; font-weight: 400; }
.devlist { flex: 1; list-style: none; border: solid #0078d7; border-width: 0 1px; padding: 0 1px 0 2px; overflow: hidden; white-space: nowrap; }
.devlist .selected { margin: 0 -1px 0 -2px; padding: 0 0 1px 2px; background: #0078d7; color: #fff; }
.hscroll { height: 20px; padding: 6px 0 0 22px; border: solid #0078d7; border-width: 0 1px 1px; background: #f0f0f0; }
.hscroll i { display: block; width: 56px; height: 6px; background: #888; }

.canvas { flex: 1; min-width: 0; border: 1px solid #606468; background: #e0e0d0; overflow: hidden; }
.sheet { display: block; width: 100%; height: 100%; }
.sheet text { font: 10px "Liberation Sans", Arial, sans-serif; fill: #181818; }
.sheet .name text { font-size: 15px; }
.sheet .end text { text-anchor: end; }
.sheet .over { text-decoration: overline; }
.sheet .big text { font-size: 42px; font-weight: bold; fill: #800000; text-decoration: underline; }
.sheet .one { font-size: 20px; font-weight: bold; fill: #c8c8c8; text-anchor: middle; }
.sheet .disp { font-family: "Liberation Mono", monospace; font-size: 9px; fill: #009000; text-anchor: middle; }
.wire { fill: none; stroke: #004000; stroke-width: 2; shape-rendering: crispEdges; }
.pin { fill: none; stroke: #800000; stroke-width: 2; shape-rendering: crispEdges; }
.dot { fill: none; stroke: #004000; stroke-width: 5; shape-rendering: crispEdges; }
.art { fill: none; stroke: #800000; stroke-width: 2; shape-rendering: crispEdges; }
.body { fill: #c8c8a8; stroke: #800000; stroke-width: 2; }
#logic .body { fill: #c00000; }

.ic-dollar { font: bold 18px "Liberation Sans", sans-serif; text-anchor: middle; fill: #8a9000; }
.ic-bits { font: bold 9px "Liberation Mono", monospace; text-anchor: middle; fill: #0020e0; }
.ic-help { font: bold 19px "Liberation Sans", sans-serif; text-anchor: middle; fill: #fff; }
.ic-a { font: bold 12px "Liberation Sans", sans-serif; text-anchor: middle; fill: #555; }
.ic-lbl { font: 12px "Liberation Sans", sans-serif; text-anchor: middle; fill: #1818c0; }
.ic-serif { font: 30px "Liberation Serif", serif; text-anchor: middle; }
.ic-s { font: bold 20px "Liberation Sans", sans-serif; text-anchor: middle; }
.ic-info { font: bold 19px "Liberation Serif", serif; text-anchor: middle; fill: #fff; }
.ic-t { font: bold 12px "Liberation Sans", sans-serif; text-anchor: middle; fill: #fff; }

.statusbar { flex: none; height: 37px; display: flex; gap: 5px; background: #dfe8f0; font: 13px "Liberation Sans", Arial, sans-serif; }
.statsec { position: relative; display: flex; align-items: center; border-right: 1px solid #9cc4d8; background: linear-gradient(#e8f4fa, #d4e8f4 50%, #bcdcee 80%, #a8cce0); }
.sim { flex: none; width: 320px; padding-left: 21px; }
.sim button { width: 24px; height: 24px; margin-right: 20px; }
.sim svg { display: block; }
.sim .sep { margin: 0 10px 0 -7px; }
.msgs { margin-left: 3px; font: 14px "Open Sans", sans-serif; color: #808488; white-space: nowrap; }
.sheetname { flex: none; width: 412px; padding-left: 12px; }
.coords { flex: 1; border: 0; overflow: hidden; font-size: 12px; }
.cx { width: 41px; margin-left: auto; }
.cy { margin-left: 532px; }
.unit { width: 13px; margin-left: 24px; color: #0000a0; overflow: hidden; }

.taskbar { flex: none; height: 59px; display: flex; align-items: center; padding-bottom: 2px; border-top: 1px solid #444; color: #fff; background: linear-gradient(90deg, #22221d, #242717 25%, #20241c 40%, #202326 60%, #22251f); }
.weather { flex: 1; display: flex; align-items: center; gap: 8px; padding-left: 24px; }
.weather p, .clock p { line-height: 20px; }
.dim { color: #c0c0c0; }
.apps { display: flex; align-items: center; gap: 5px; padding-left: 4px; }
.apps button { position: relative; width: 50px; height: 50px; display: flex; align-items: center; justify-content: center; border-radius: 5px; }
.apps .search { width: 124px; height: 40px; margin: 0 2px; gap: 6px; border-radius: 20px; background: #31332d; }
.apps .active { background: #2f3334; }
.run::after { content: ""; position: absolute; left: 21px; bottom: 1px; width: 8px; height: 4px; border-radius: 2px; background: #999; }
.active::after { left: 15px; width: 20px; background: #4cc2ff; }
.tray { flex: 1; display: flex; align-items: center; justify-content: flex-end; gap: 10px; padding-right: 25px; }
.clock { text-align: right; margin-left: 10px; }
.badge { width: 19px; height: 19px; border-radius: 50%; background: #4cc2ff; color: #111; font-size: 12px; line-height: 19px; text-align: center; }
```
